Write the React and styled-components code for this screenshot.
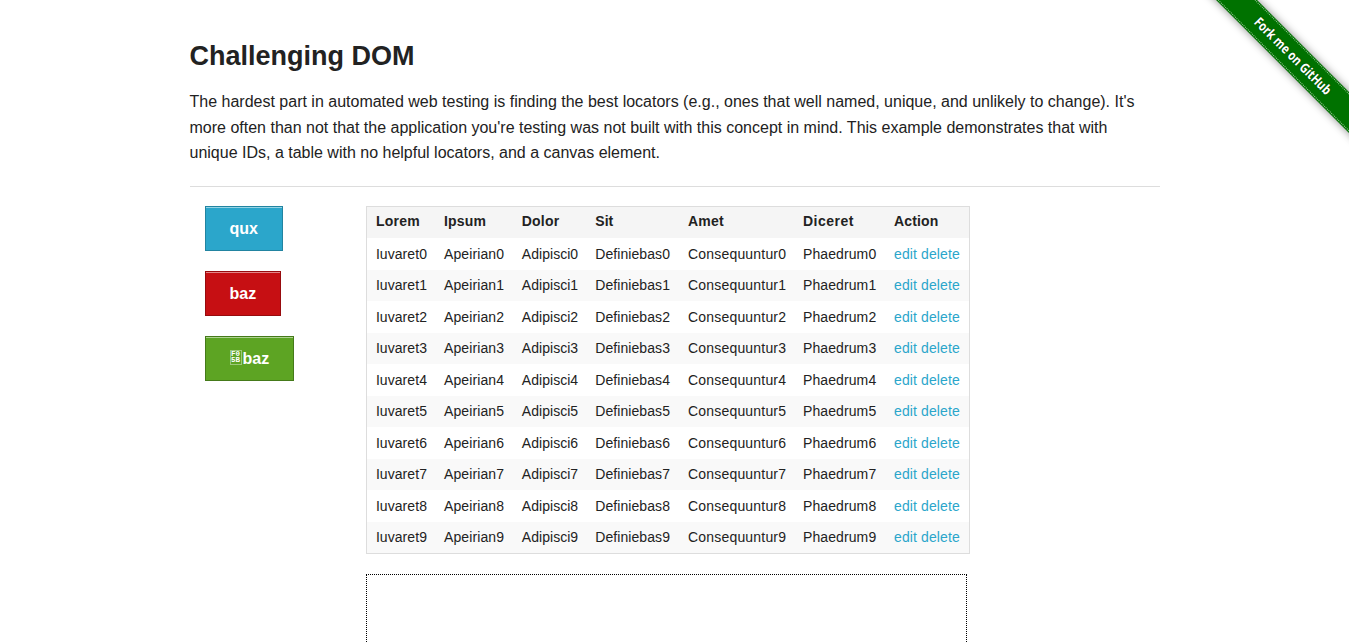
import React from "react";
import styled, { createGlobalStyle } from "styled-components";

const GlobalStyle = createGlobalStyle`
  *, *::before, *::after { box-sizing: border-box; }
  html, body { height: 100%; }
  body {
    margin: 0;
    overflow: hidden;
    background: #fff;
    color: #222;
    font: normal 16px/1 "Helvetica Neue", Helvetica, Arial, "Liberation Sans", sans-serif;
  }
`;

const Page = styled.div`
  position: relative;
  width: 1349px;
  height: 643px;
  overflow: hidden;
`;

const Content = styled.main`
  width: 1000px;
  margin: 0 auto;
  padding: 37.5px 15px 0;
`;

const Title = styled.h3`
  margin: 0 0 13.8px;
  font-size: 27px;
  line-height: 1.4;
  font-weight: bold;
`;

const Intro = styled.p`
  margin: 0 0 19.7px;
  line-height: 1.6;
`;

const Divider = styled.hr`
  height: 0;
  margin: 0 0 19px;
  border: solid #ddd;
  border-width: 1px 0 0;
`;

const Columns = styled.div`
  display: grid;
  grid-template-columns: 1fr 5fr;
`;

const Column = styled.div`
  min-width: 0;
  padding: 0 15px;
`;

const ButtonColumn = styled(Column)`
  display: flex;
  flex-direction: column;
  align-items: flex-start;
  gap: 20px;
`;

const Button = styled.a`
  display: flex;
  padding: 13px 24px 12px;
  border: 1px solid ${(p) => p.$edge};
  background: ${(p) => p.$fill};
  box-shadow: 0 1px 0 rgba(255, 255, 255, 0.5) inset;
  color: #fff;
  font-weight: bold;
  line-height: 18px;
  cursor: pointer;
`;

const CodeGlyph = styled.span`
  display: flex;
  flex-direction: column;
  align-items: center;
  justify-content: center;
  width: 12px;
  height: 15px;
  margin: 0 1px 0 0;
  border: 1px solid rgba(255, 255, 255, 0.4);
  font: bold 7.5px/6.5px "Liberation Mono", monospace;
`;

const Table = styled.table`
  width: 604px;
  table-layout: fixed;
  margin: 0 0 20px;
  border: 1px solid #ddd;
  border-spacing: 0;
  background: #fff;
  font-size: 14px;
  line-height: 15.75px;
  white-space: nowrap;
`;

const HeadCell = styled.th`
  width: ${(p) => p.$width}px;
  padding: 7px 0 8.75px 8.75px;
  background: #f5f5f5;
  text-align: left;
  font-weight: bold;
  letter-spacing: ${(p) => p.$tracking}px;
`;

const Row = styled.tr`
  background: ${(p) => (p.$striped ? "#f9f9f9" : "#fff")};
`;

const Cell = styled.td`
  padding: 8.5px 0 7.25px 8.75px;
  letter-spacing: ${(p) => p.$tracking}px;
`;

const Link = styled.a`
  color: #2ba6cb;
  text-decoration: none;
`;

const Canvas = styled.canvas`
  display: block;
  width: 601px;
  height: 202px;
  border: 1px dotted #000;
`;

const Ribbon = styled.a`
  position: absolute;
  top: 0;
  right: 0;
  width: 149px;
  height: 149px;
  overflow: hidden;
`;

const Band = styled.span`
  position: absolute;
  top: 42px;
  left: -17.2px;
  display: flex;
  justify-content: center;
  width: 220px;
  height: 29.4px;
  background: #007200;
  box-shadow: 0 0 8px rgba(0, 0, 0, 0.45);
  transform: rotate(45deg);

  &::before {
    content: "";
    position: absolute;
    inset: 1px 0;
    border: dotted rgba(255, 255, 255, 0.6);
    border-width: 1px 0;
  }
`;

const BandLabel = styled.span`
  margin-right: 2px;
  transform: scaleX(0.81);
  color: #fff;
  font: bold 13.5px/29px "Open Sans", sans-serif;
  white-space: nowrap;
  text-shadow: 0 0 2px rgba(0, 0, 0, 0.5);
`;

const COLUMNS = [
  { title: "Lorem", word: "Iuvaret", width: 68.1, head: 0.25, body: 0.06 },
  { title: "Ipsum", word: "Apeirian", width: 77.8, head: 0.2, body: 0.1 },
  { title: "Dolor", word: "Adipisci", width: 73.4, head: 0.2, body: 0.04 },
  { title: "Sit", word: "Definiebas", width: 92.8, head: 0.1, body: 0.08 },
  { title: "Amet", word: "Consequuntur", width: 115, head: 0.2, body: 0.19 },
  { title: "Diceret", word: "Phaedrum", width: 91, head: 0.5, body: 0.1 },
  { title: "Action", word: null, width: 83.9, head: 0.15, body: 0.12 },
];

export default function App() {
  return (
    <Page>
      <GlobalStyle />
      <Content>
        <Title>Challenging DOM</Title>
        <Intro>
          The hardest part in automated web testing is finding the best locators (e.g., ones that well named, unique,
          and unlikely to change). It's more often than not that the application you're testing was not built with this
          concept in mind. This example demonstrates that with unique IDs, a table with no helpful locators, and a
          canvas element.
        </Intro>
        <Divider />
        <Columns>
          <ButtonColumn>
            <Button $fill="#2ba6cb" $edge="#2284a1">qux</Button>
            <Button $fill="#c60f13" $edge="#970b0e">baz</Button>
            <Button $fill="#5da423" $edge="#457a1a">
              <CodeGlyph>
                <span>F0</span>
                <span>5B</span>
              </CodeGlyph>
              baz
            </Button>
          </ButtonColumn>
          <Column>
            <Table>
              <thead>
                <tr>
                  {COLUMNS.map((c) => (
                    <HeadCell key={c.title} $width={c.width} $tracking={c.head}>{c.title}</HeadCell>
                  ))}
                </tr>
              </thead>
              <tbody>
                {Array.from({ length: 10 }, (_, i) => (
                  <Row key={i} $striped={i % 2 === 1}>
                    {COLUMNS.map((c) => (
                      <Cell key={c.title} $tracking={c.body}>
                        {c.word ? c.word + i : <><Link>edit</Link> <Link>delete</Link></>}
                      </Cell>
                    ))}
                  </Row>
                ))}
              </tbody>
            </Table>
            <Canvas />
          </Column>
        </Columns>
      </Content>
      <Ribbon>
        <Band>
          <BandLabel>Fork me on GitHub</BandLabel>
        </Band>
      </Ribbon>
    </Page>
  );
}
